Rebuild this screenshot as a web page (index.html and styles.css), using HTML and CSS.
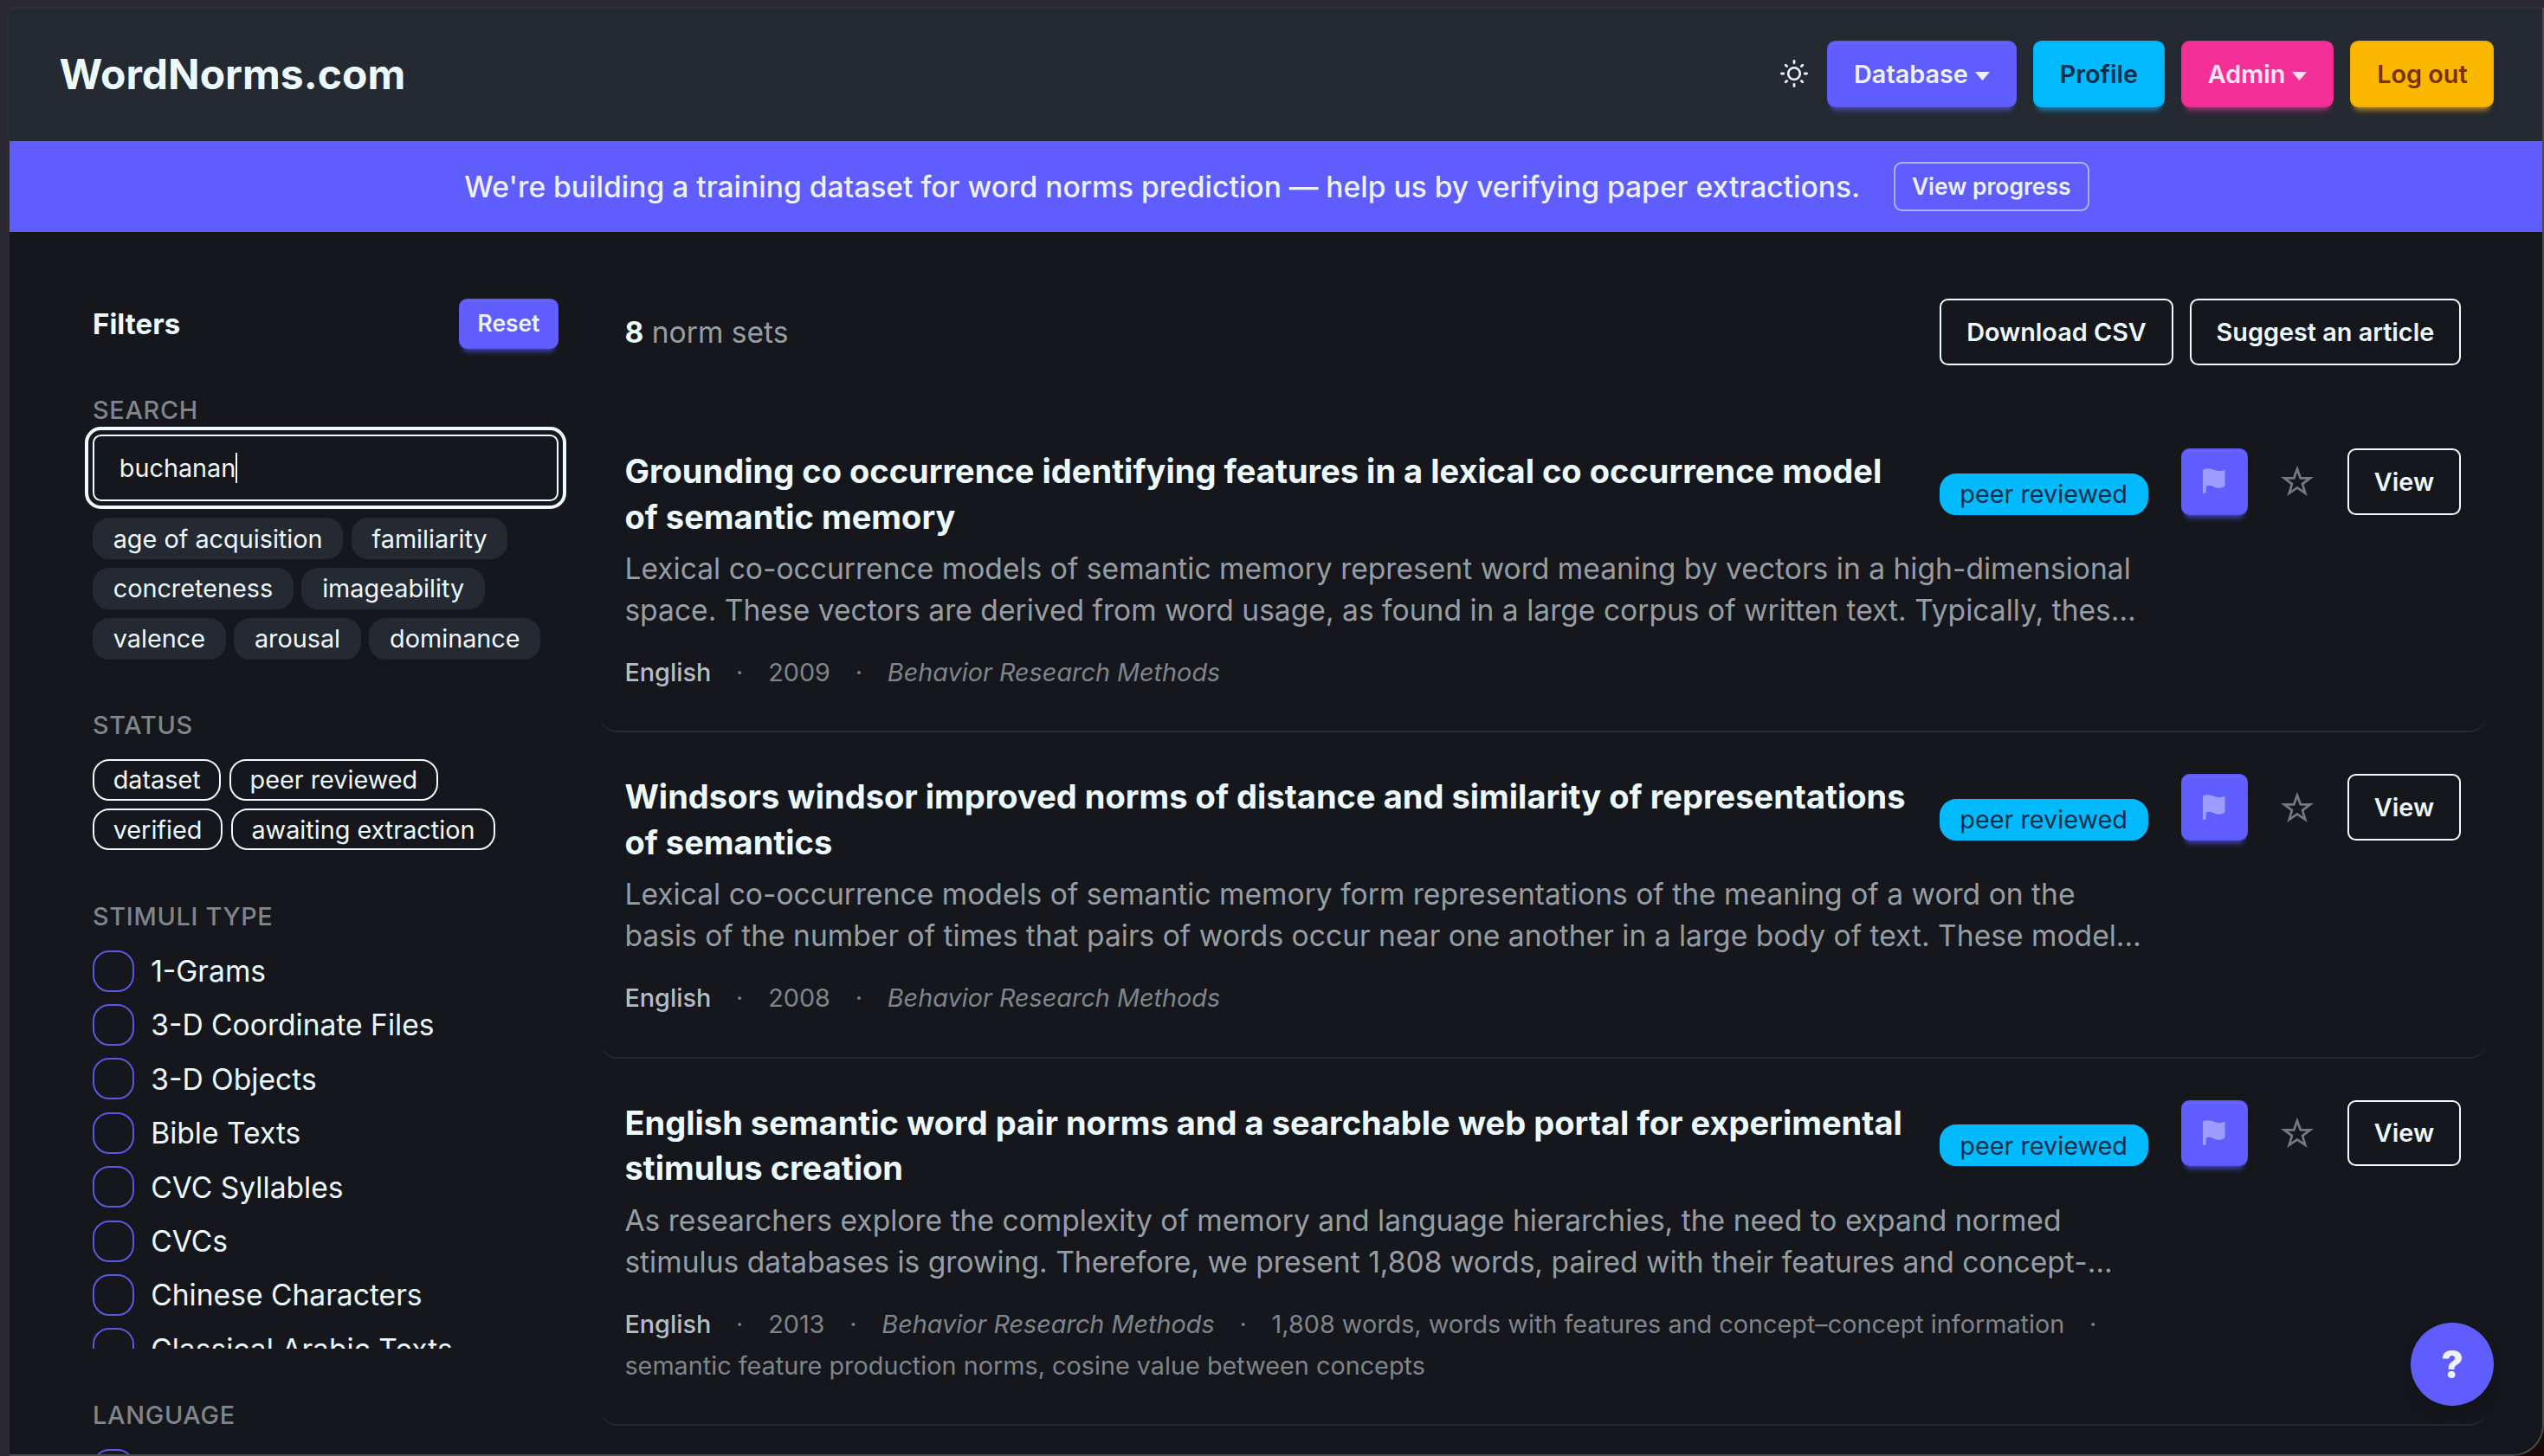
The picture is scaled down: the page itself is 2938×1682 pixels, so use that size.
FILE: index.html
```html
<!DOCTYPE html>
<html lang="en">

<head>
  <meta charset="UTF-8">
  <meta name="viewport" content="width=device-width, initial-scale=1.0">
  <title>WordNorms.com</title>
  <link rel="stylesheet" href="styles.css">
</head>

<body>
  <!-- shared icons -->
  <svg class="sprite">
    <symbol id="flag" viewBox="0 0 26 30">
      <path d="M0 1.4C4-.4 9-.1 13 1.8c4 1.8 8 1.8 12.5.3v18.4c-4.5 3.2-9 2.7-13 .7-3-1.6-6-2-8.8-.7v7.5L0 29.3Z" fill="currentColor" />
    </symbol>
    <symbol id="star" viewBox="0 0 32 32">
      <path d="M16 4l3.2 8.9h9.4l-7.5 5.7 2.7 9L16 22.3l-7.8 5.3 2.7-9-7.5-5.7h9.4Z" fill="none" stroke="currentColor" stroke-width="2.3" />
    </symbol>
    <symbol id="caret" viewBox="0 0 17 10">
      <path d="M0 0h17L8.5 10Z" fill="currentColor" />
    </symbol>
  </svg>

  <div class="window">
    <header class="navbar">
      <a class="brand">WordNorms.com</a>
      <nav class="nav-actions">
        <svg class="sun" viewBox="0 0 38 38" fill="none" stroke="currentColor" stroke-linecap="round">
          <circle cx="19" cy="19" r="6.8" stroke-width="2.6" />
          <path stroke-width="2.8" d="M19 4.5v2.2M19 31.3v2.2M4.5 19h2.2M31.3 19h2.2M9.2 9.2l1.4 1.4M27.4 27.4l1.4 1.4M9.2 28.8l1.4-1.4M27.4 10.6l1.4-1.4" />
        </svg>
        <button class="btn primary">Database<svg class="caret"><use href="#caret" /></svg></button>
        <button class="btn info">Profile</button>
        <button class="btn secondary">Admin<svg class="caret"><use href="#caret" /></svg></button>
        <button class="btn warning">Log out</button>
      </nav>
    </header>

    <div class="banner">
      <span>We're building a training dataset for word norms prediction — help us by verifying paper extractions.</span>
      <button class="btn small ghost">View progress</button>
    </div>

    <div class="content">
      <aside class="sidebar">
        <div class="sidebar-head">
          <h2>Filters</h2>
          <button class="btn small primary">Reset</button>
        </div>

        <section class="group search">
          <h3>SEARCH</h3>
          <div class="input">buchanan<i class="cursor"></i></div>
          <div class="tags">
            <span class="badge filled">age of acquisition</span>
            <span class="badge filled">familiarity</span>
            <span class="badge filled">concreteness</span>
            <span class="badge filled">imageability</span>
            <span class="badge filled">valence</span>
            <span class="badge filled">arousal</span>
            <span class="badge filled">dominance</span>
          </div>
        </section>

        <section class="group">
          <h3>STATUS</h3>
          <div class="tags">
            <span class="badge">dataset</span>
            <span class="badge">peer reviewed</span>
            <span class="badge">verified</span>
            <span class="badge">awaiting extraction</span>
          </div>
        </section>

        <section class="group">
          <h3>STIMULI TYPE</h3>
          <ul class="checks">
            <li><i class="box"></i>1-Grams</li>
            <li><i class="box"></i>3-D Coordinate Files</li>
            <li><i class="box"></i>3-D Objects</li>
            <li><i class="box"></i>Bible Texts</li>
            <li><i class="box"></i>CVC Syllables</li>
            <li><i class="box"></i>CVCs</li>
            <li><i class="box"></i>Chinese Characters</li>
            <li><i class="box"></i>Classical Arabic Texts</li>
          </ul>
        </section>

        <section class="group">
          <h3>LANGUAGE</h3>
          <ul class="checks">
            <li><i class="box"></i></li>
          </ul>
        </section>
      </aside>

      <main class="main">
        <div class="toolbar">
          <p class="count"><b>8</b> norm sets</p>
          <button class="btn outline">Download CSV</button>
          <button class="btn outline">Suggest an article</button>
        </div>

        <article class="item">
          <div class="item-body">
            <div class="item-head">
              <h4>Grounding co occurrence identifying features in a lexical co occurrence model of semantic memory</h4>
              <span class="badge reviewed">peer reviewed</span>
            </div>
            <p class="desc">Lexical co-occurrence models of semantic memory represent word meaning by vectors in a high-dimensional space. These vectors are derived from word usage, as found in a large corpus of written text. Typically, thes…</p>
            <div class="meta">
              <span class="lang">English</span><span>·</span><span>2009</span><span>·</span><em>Behavior Research Methods</em>
            </div>
          </div>
          <div class="item-actions">
            <button class="btn square primary"><svg class="flag"><use href="#flag" /></svg></button>
            <button class="btn square bare"><svg class="star"><use href="#star" /></svg></button>
            <button class="btn outline view">View</button>
          </div>
        </article>

        <article class="item">
          <div class="item-body">
            <div class="item-head">
              <h4>Windsors windsor improved norms of distance and similarity of representations of semantics</h4>
              <span class="badge reviewed">peer reviewed</span>
            </div>
            <p class="desc">Lexical co-occurrence models of semantic memory form representations of the meaning of a word on the basis of the number of times that pairs of words occur near one another in a large body of text. These model…</p>
            <div class="meta">
              <span class="lang">English</span><span>·</span><span>2008</span><span>·</span><em>Behavior Research Methods</em>
            </div>
          </div>
          <div class="item-actions">
            <button class="btn square primary"><svg class="flag"><use href="#flag" /></svg></button>
            <button class="btn square bare"><svg class="star"><use href="#star" /></svg></button>
            <button class="btn outline view">View</button>
          </div>
        </article>

        <article class="item">
          <div class="item-body">
            <div class="item-head">
              <h4>English semantic word pair norms and a searchable web portal for experimental stimulus creation</h4>
              <span class="badge reviewed">peer reviewed</span>
            </div>
            <p class="desc">As researchers explore the complexity of memory and language hierarchies, the need to expand normed stimulus databases is growing. Therefore, we present 1,808 words, paired with their features and concept-…</p>
            <div class="meta">
              <span class="lang">English</span><span>·</span><span>2013</span><span>·</span><em>Behavior Research Methods</em><span>·</span><span>1,808 words, words with features and concept–concept information</span><span>·</span><span>semantic feature production norms, cosine value between concepts</span>
            </div>
          </div>
          <div class="item-actions">
            <button class="btn square primary"><svg class="flag"><use href="#flag" /></svg></button>
            <button class="btn square bare"><svg class="star"><use href="#star" /></svg></button>
            <button class="btn outline view">View</button>
          </div>
        </article>
      </main>
    </div>

    <button class="help">?</button>
    <div class="edge"></div>
  </div>
</body>

</html>
```

FILE: styles.css
```css
* {
  margin: 0;
  padding: 0;
  box-sizing: border-box;
}

/* everything is sized from the root */
html {
  font-size: 38.4px;
}

body {
  height: 1682px;
  padding: 9px 0 0 11px;
  overflow: hidden;
  background: #2b2931;
  color: #ecf9ff;
  font-family: Inter, "Liberation Sans", sans-serif;
  font-size: 0.75rem;
}

ul {
  list-style: none;
}

.sprite {
  display: none;
}

.window {
  position: relative;
  height: 1673px;
  overflow: hidden;
  background: #15171c;
}

/* window outline and its rounded corner */
.edge {
  position: absolute;
  inset: 0;
  border-right: 2px solid #48494d;
  border-bottom: 2px solid #48494d;
  border-radius: 0 0 36px 0;
  box-shadow: 0 0 0 40px #180807;
  pointer-events: none;
}

/* buttons */
.btn {
  display: flex;
  align-items: center;
  justify-content: center;
  flex-shrink: 0;
  height: 2rem;
  padding: 0 0.75rem;
  border: 2px solid transparent;
  border-radius: 0.25rem;
  background: none;
  color: #ecf9ff;
  font: 620 0.75rem Inter, sans-serif;
  white-space: nowrap;
}

.btn.small {
  height: 1.5rem;
  padding: 0 0.5rem 1px;
  font-size: 0.6875rem;
}

.btn.primary {
  background: #605dff;
  border-color: #5d5af5;
  color: #edf1fe;
  box-shadow: inset 0 1px 0 1px rgba(255, 255, 255, 0.06), 0 7px 5px -5px rgba(96, 93, 255, 0.4), 0 9px 7px -5px rgba(96, 93, 255, 0.4);
}

.btn.info {
  background: #00bafe;
  border-color: #00b3f4;
  color: #042e49;
  box-shadow: 0 7px 5px -5px rgba(0, 186, 254, 0.4), 0 9px 7px -5px rgba(0, 186, 254, 0.4);
}

.btn.secondary {
  background: #f43098;
  border-color: #ea2e92;
  color: #f9e4f0;
  box-shadow: 0 7px 5px -5px rgba(244, 48, 152, 0.4), 0 9px 7px -5px rgba(244, 48, 152, 0.4);
}

.btn.warning {
  background: #fcb700;
  border-color: #f2b000;
  color: #793205;
  box-shadow: 0 7px 5px -5px rgba(252, 183, 0, 0.4), 0 9px 7px -5px rgba(252, 183, 0, 0.4);
}

.btn.outline {
  border-color: #ecf9ff;
}

.btn.ghost {
  border-color: #b0b1ff;
  color: #edf1fe;
}

.btn.square {
  width: 2rem;
  padding: 0;
}

.btn.bare {
  color: #75797e;
}

.btn.view {
  width: 131px;
}

.caret {
  width: 17px;
  height: 10px;
  margin: 5px 0 0 8px;
}

/* navbar */
.navbar {
  display: flex;
  align-items: center;
  justify-content: space-between;
  height: 4rem;
  padding: 0 1.5rem 2px;
  border-top: 1px solid #30333c;
  background: #252932;
}

.brand {
  font-size: 1.25rem;
  font-weight: 700;
}

.nav-actions {
  display: flex;
  align-items: center;
  gap: 0.5rem;
}

.sun {
  width: 38px;
  height: 38px;
}

/* banner */
.banner {
  display: flex;
  align-items: center;
  justify-content: center;
  gap: 1rem;
  height: 2.75rem;
  background: #605dff;
  color: #edf1fe;
  font-size: 0.875rem;
  font-weight: 500;
}

.content {
  display: flex;
  gap: 2rem;
  padding: 2rem 2.5rem 0;
}

/* sidebar */
.sidebar {
  flex: 0 0 14rem;
}

.sidebar-head {
  display: flex;
  align-items: center;
  justify-content: space-between;
}

.sidebar-head h2 {
  font-size: 0.86rem;
  font-weight: 650;
}

.group {
  margin-top: 1.5rem;
}

.group h3 {
  margin-bottom: 0.5rem;
  color: #7f858b;
  font-size: 0.75rem;
  font-weight: 500;
  line-height: 1rem;
  letter-spacing: 0.025em;
}

.search {
  margin-top: 1.375rem;
}

.search h3 {
  margin-bottom: 0.225rem;
}

.input {
  display: flex;
  align-items: center;
  height: 2rem;
  margin-bottom: 0.5rem;
  padding: 0 0.75rem;
  border: 2px solid #ecf9ff;
  border-radius: 0.25rem;
  outline: 4px solid #ecf9ff;
  outline-offset: 5px;
}

.cursor {
  width: 2px;
  height: 35px;
  background: #ecf9ff;
}

.tags {
  display: flex;
  flex-wrap: wrap;
  gap: 0.25rem;
}

.badge {
  display: flex;
  align-items: center;
  flex-shrink: 0;
  height: 1.25rem;
  padding: 0 21.7px;
  border: 2px solid #ecf9ff;
  border-radius: 0.5rem;
  white-space: nowrap;
}

.badge.filled {
  border-color: #252932;
  background: #252932;
}

.badge.reviewed {
  border-color: #00bafe;
  background: #00bafe;
  color: #042e49;
}

.checks {
  display: flex;
  flex-direction: column;
  gap: 0.375rem;
  max-height: 12rem;
  overflow: hidden;
  font-size: 0.875rem;
}

.checks li {
  display: flex;
  align-items: center;
  gap: 0.5rem;
  flex-shrink: 0;
  height: 1.25rem;
}

.box {
  width: 1.25rem;
  height: 1.25rem;
  border: 2px solid #5c59e0;
  border-radius: 0.5rem;
}

/* results */
.main {
  flex: 1;
  min-width: 0;
}

.toolbar {
  display: flex;
  align-items: center;
  gap: 0.5rem;
  margin-bottom: 1.25rem;
}

.count {
  flex: 1;
  color: #969ea4;
  font-size: 0.875rem;
}

.count b {
  color: #ecf9ff;
}

.item {
  display: flex;
  gap: 1rem;
  margin: 0 -0.75rem;
  padding: 1.25rem 0.75rem;
  border-bottom: 2px solid #26292e;
  border-radius: 0.5rem;
}

.item-body {
  flex: 1;
  min-width: 0;
}

.item-head {
  display: flex;
  align-items: center;
  gap: 0.5rem;
}

.item-head h4 {
  flex: 1;
  font-size: 0.991rem;
  font-weight: 650;
  line-height: 1.375rem;
}

.desc {
  margin-top: 0.25rem;
  color: #969ea4;
  font-size: 0.875rem;
  line-height: 1.25rem;
}

.meta {
  display: flex;
  flex-wrap: wrap;
  gap: 0.25rem 0.75rem;
  margin-top: 0.75rem;
  color: #7f858b;
  line-height: 1rem;
}

.lang {
  color: #b5bdc3;
  font-weight: 500;
}

.item-actions {
  display: flex;
  gap: 0.5rem;
}

.flag {
  width: 26px;
  height: 30px;
  color: #9d9dff;
}

.star {
  width: 38px;
  height: 38px;
}

/* floating help */
.help {
  position: absolute;
  right: 58px;
  bottom: 58px;
  width: 2.5rem;
  height: 2.5rem;
  border: none;
  border-radius: 50%;
  background: #605dff;
  box-shadow: 0 8px 16px rgba(0, 0, 0, 0.15);
  color: #edf1fe;
  font: 800 1.15rem Inter, sans-serif;
}
```
